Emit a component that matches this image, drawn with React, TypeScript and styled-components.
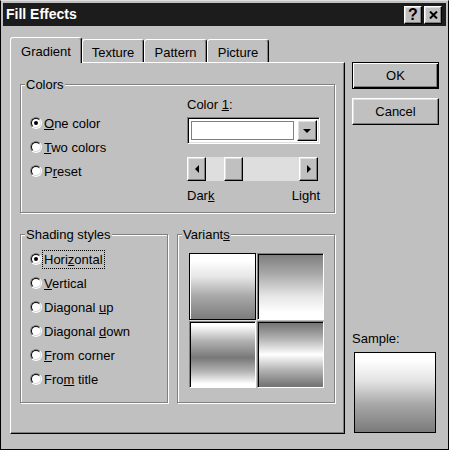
import React from 'react';
import styled, { createGlobalStyle, css } from 'styled-components';

const Global = createGlobalStyle`
  html, body { margin: 0; padding: 0; background: #c0c0c0; }
  body {
    font-family: "Liberation Sans", Arial, sans-serif;
    font-size: 13px;
    line-height: 15px;
    color: #000;
  }
  #root { width: 449px; height: 450px; }
  * { box-sizing: border-box; }
`;

const raised = css`
  border: 1px solid;
  border-color: #fff #000 #000 #fff;
  box-shadow: inset -1px -1px 0 #808080, inset 1px 1px 0 #dfdfdf;
  background: #c0c0c0;
`;

const sunken = css`
  border: 1px solid;
  border-color: #808080 #fff #fff #808080;
  box-shadow: inset 1px 1px 0 #000, inset -1px -1px 0 #dfdfdf;
`;

const Window = styled.div`
  width: 449px;
  height: 450px;
  border: 1px solid #000;
  border-top-color: #dfdfdf;
  padding: 2px;
  background: #c0c0c0;
  display: flex;
  flex-direction: column;
`;

const TitleBar = styled.div`
  height: 23px;
  flex: none;
  background: #1c1c1c;
  display: flex;
  align-items: center;
  justify-content: space-between;
  padding: 0 4px 0 3px;
`;

const Title = styled.span`
  color: #fff;
  font-weight: bold;
  font-size: 14px;
`;

const TitleButtons = styled.div`
  display: flex;
  gap: 2px;
`;

const TitleButton = styled.div`
  ${raised};
  width: 18px;
  height: 18px;
  display: flex;
  align-items: center;
  justify-content: center;
  font-weight: bold;
  font-size: 16px;
  line-height: 16px;
`;

const Body = styled.div`
  flex: 1;
  display: flex;
  gap: 7px;
  padding: 11px 7px 13px 7px;
`;

const LeftCol = styled.div`
  width: 335px;
  display: flex;
  flex-direction: column;
`;

const TabRow = styled.div`
  display: flex;
  align-items: flex-end;
  height: 26px;
  margin-bottom: -1px;
  position: relative;
  z-index: 1;
`;

const Tab = styled.div<{ $active?: boolean; $w: number }>`
  width: ${(p) => p.$w}px;
  height: ${(p) => (p.$active ? 26 : 23)}px;
  margin-bottom: ${(p) => (p.$active ? 0 : 1)}px;
  border: 1px solid;
  border-bottom: none;
  border-color: #fff #000 transparent #fff;
  border-radius: 3px 3px 0 0;
  box-shadow: inset -1px 0 0 #808080;
  background: #c0c0c0;
  text-align: center;
  padding-top: ${(p) => (p.$active ? 6 : 5)}px;
`;

const Panel = styled.div`
  flex: 1;
  position: relative;
  border: 1px solid;
  border-color: #fff #000 #000 #fff;
  box-shadow: inset -1px -1px 0 #808080;
  padding: 21px 9px 0 9px;
  display: flex;
  flex-direction: column;
`;

const Group = styled.div<{ $w?: number }>`
  position: relative;
  border: 1px solid #808080;
  box-shadow: inset 1px 1px 0 #fff, 1px 1px 0 #fff;
  ${(p) => (p.$w ? `width: ${p.$w}px;` : '')}
`;

const Legend = styled.span`
  position: absolute;
  top: -8px;
  left: 4px;
  padding: 0 1px;
  background: #c0c0c0;
  line-height: 15px;
`;

const ColorsBody = styled.div`
  display: flex;
  padding: 0 14px 9px 9px;
`;

const RadioCol = styled.div<{ $top: number }>`
  display: flex;
  flex-direction: column;
  padding-top: ${(p) => p.$top}px;
`;

const ColorsLeft = styled(RadioCol)`
  width: 157px;
`;

const RadioRow = styled.div`
  height: 24px;
  display: flex;
  align-items: center;
`;

const RadioOuter = styled.span`
  width: 12px;
  height: 12px;
  flex: none;
  border-radius: 50%;
  border: 1px solid;
  border-color: #808080 #fff #fff #808080;
  display: flex;
  align-items: center;
  justify-content: center;
`;

const RadioInner = styled.span`
  width: 10px;
  height: 10px;
  border-radius: 50%;
  border: 1px solid;
  border-color: #000 #dfdfdf #dfdfdf #000;
  background: #fff;
  display: flex;
  align-items: center;
  justify-content: center;
`;

const Dot = styled.span`
  width: 4px;
  height: 4px;
  border-radius: 50%;
  background: #000;
`;

const RadioLabel = styled.span<{ $focus?: boolean }>`
  padding: 1px 1px;
  border: 1px dotted ${(p) => (p.$focus ? '#000' : 'transparent')};
`;

const ColorsRight = styled.div`
  width: 133px;
  display: flex;
  flex-direction: column;
  padding-top: 12px;
`;

const Combo = styled.div`
  ${sunken};
  margin-top: 5px;
  height: 27px;
  background: #fff;
  display: flex;
  padding: 2px;
`;

const ComboValue = styled.div`
  flex: 1;
  margin: 1px 3px 1px 1px;
  border: 1px solid #808080;
  background: #fff;
`;

const ComboButton = styled.div`
  ${raised};
  width: 20px;
  display: flex;
  align-items: center;
  justify-content: center;
`;

const Scrollbar = styled.div`
  margin-top: 13px;
  width: 131px;
  height: 24px;
  display: flex;
`;

const ScrollButton = styled.div`
  ${raised};
  width: 19px;
  flex: none;
  display: flex;
  align-items: center;
  justify-content: center;
`;

const Track = styled.div`
  flex: 1;
  display: flex;
  background: #dedede;
`;

const Thumb = styled.div<{ $offset: number }>`
  ${raised};
  width: 19px;
  margin-left: ${(p) => p.$offset}px;
`;

const RangeLabels = styled.div`
  margin-top: 7px;
  display: flex;
  justify-content: space-between;
`;

const BottomRow = styled.div`
  display: flex;
  gap: 9px;
  margin-top: 21px;
`;

const ShadingBody = styled(RadioCol)`
  padding-left: 9px;
  padding-bottom: 11px;
`;

const SwatchGrid = styled.div`
  display: grid;
  grid-template-columns: 67px 67px;
  grid-auto-rows: 67px;
  gap: 1px;
  padding: 18px 0 0 11px;
`;

const Swatch = styled.div<{ $bg: string; $selected?: boolean }>`
  background: ${(p) => p.$bg};
  border: 1px solid;
  ${(p) =>
    p.$selected
      ? css`
          border-color: #000;
          box-shadow: inset 1px 1px 0 #fff, 1px 1px 0 #dfdfdf;
        `
      : css`
          border-color: #808080 #fff #fff #808080;
          box-shadow: inset 1px 1px 0 #000;
        `}
`;

const RightCol = styled.div`
  width: 87px;
  display: flex;
  flex-direction: column;
  padding-top: 25px;
`;

const Button = styled.button<{ $default?: boolean }>`
  width: 87px;
  height: 27px;
  padding: 0;
  font: inherit;
  color: #000;
  background: #c0c0c0;
  border: 1px solid;
  border-color: #fff #000 #000 #fff;
  box-shadow: inset -1px -1px 0 #808080, inset 1px 1px 0 #dfdfdf;
  & + & {
    margin-top: 9px;
  }
  ${(p) =>
    p.$default &&
    css`
      border-color: #000;
      box-shadow: inset 1px 1px 0 #fff, inset -1px -1px 0 #000, inset -2px -2px 0 #808080;
    `}
`;

const SampleLabel = styled.div`
  margin-top: auto;
`;

const SampleBox = styled.div`
  margin: 6px 0 1px 2px;
  width: 82px;
  height: 81px;
  border: 1px solid #000;
  background: linear-gradient(to bottom, #fff 8%, #e4e4e4 35%, #a8a8a8 65%, #7a7a7a 100%);
`;

const Tri = ({ dir }: { dir: 'left' | 'right' | 'down' }) => {
  const pts =
    dir === 'left' ? '5,0 5,8 1,4' : dir === 'right' ? '1,0 1,8 5,4' : '0,1 8,1 4,5';
  const w = dir === 'down' ? 9 : 6;
  const h = dir === 'down' ? 6 : 9;
  return (
    <svg width={w} height={h} viewBox={`0 0 ${w} ${h}`}>
      <polygon points={pts} fill="#000" />
    </svg>
  );
};

const Radio = ({ checked }: { checked?: boolean }) => (
  <RadioOuter>
    <RadioInner>{checked && <Dot />}</RadioInner>
  </RadioOuter>
);

const g1 = 'linear-gradient(to bottom, #fff 10%, #e6e6e6 35%, #a8a8a8 65%, #7c7c7c 100%)';
const g2 = 'linear-gradient(to bottom, #7c7c7c 0%, #a8a8a8 30%, #e6e6e6 65%, #fff 90%)';
const g3 = 'linear-gradient(to bottom, #fff 5%, #b0b0b0 30%, #777 55%, #b0b0b0 75%, #fff 95%)';
const g4 = 'linear-gradient(to bottom, #777 3%, #b0b0b0 25%, #fff 50%, #b0b0b0 75%, #777 97%)';

export default function App() {
  return (
    <>
      <Global />
      <Window>
        <TitleBar>
          <Title>Fill Effects</Title>
          <TitleButtons>
            <TitleButton>?</TitleButton>
            <TitleButton>
              <svg width="9" height="8" viewBox="0 0 9 8">
                <path d="M1 0.5 L8 7.5 M8 0.5 L1 7.5" stroke="#000" strokeWidth="2" />
              </svg>
            </TitleButton>
          </TitleButtons>
        </TitleBar>
        <Body>
          <LeftCol>
            <TabRow>
              <Tab $active $w={72}>Gradient</Tab>
              <Tab $w={62}>Texture</Tab>
              <Tab $w={63}>Pattern</Tab>
              <Tab $w={62}>Picture</Tab>
            </TabRow>
            <Panel>
              <Group>
                <Legend>Colors</Legend>
                <ColorsBody>
                  <ColorsLeft $top={26}>
                    <RadioRow>
                      <Radio checked />
                      <RadioLabel><u>O</u>ne color</RadioLabel>
                    </RadioRow>
                    <RadioRow>
                      <Radio />
                      <RadioLabel><u>T</u>wo colors</RadioLabel>
                    </RadioRow>
                    <RadioRow>
                      <Radio />
                      <RadioLabel>P<u>r</u>eset</RadioLabel>
                    </RadioRow>
                  </ColorsLeft>
                  <ColorsRight>
                    <div>Color <u>1</u>:</div>
                    <Combo>
                      <ComboValue />
                      <ComboButton>
                        <Tri dir="down" />
                      </ComboButton>
                    </Combo>
                    <Scrollbar>
                      <ScrollButton>
                        <Tri dir="left" />
                      </ScrollButton>
                      <Track>
                        <Thumb $offset={18} />
                      </Track>
                      <ScrollButton>
                        <Tri dir="right" />
                      </ScrollButton>
                    </Scrollbar>
                    <RangeLabels>
                      <span>Dar<u>k</u></span>
                      <span>Light</span>
                    </RangeLabels>
                  </ColorsRight>
                </ColorsBody>
              </Group>
              <BottomRow>
                <Group $w={148}>
                  <Legend>Shading styles</Legend>
                  <ShadingBody $top={12}>
                    <RadioRow>
                      <Radio checked />
                      <RadioLabel $focus>Hori<u>z</u>ontal</RadioLabel>
                    </RadioRow>
                    <RadioRow>
                      <Radio />
                      <RadioLabel><u>V</u>ertical</RadioLabel>
                    </RadioRow>
                    <RadioRow>
                      <Radio />
                      <RadioLabel>Diagonal <u>u</u>p</RadioLabel>
                    </RadioRow>
                    <RadioRow>
                      <Radio />
                      <RadioLabel>Diagonal <u>d</u>own</RadioLabel>
                    </RadioRow>
                    <RadioRow>
                      <Radio />
                      <RadioLabel><u>F</u>rom corner</RadioLabel>
                    </RadioRow>
                    <RadioRow>
                      <Radio />
                      <RadioLabel>Fro<u>m</u> title</RadioLabel>
                    </RadioRow>
                  </ShadingBody>
                </Group>
                <Group $w={158}>
                  <Legend>Variant<u>s</u></Legend>
                  <SwatchGrid>
                    <Swatch $bg={g1} $selected />
                    <Swatch $bg={g2} />
                    <Swatch $bg={g3} />
                    <Swatch $bg={g4} />
                  </SwatchGrid>
                </Group>
              </BottomRow>
            </Panel>
          </LeftCol>
          <RightCol>
            <Button $default>OK</Button>
            <Button>Cancel</Button>
            <SampleLabel>Sample:</SampleLabel>
            <SampleBox />
          </RightCol>
        </Body>
      </Window>
    </>
  );
}
